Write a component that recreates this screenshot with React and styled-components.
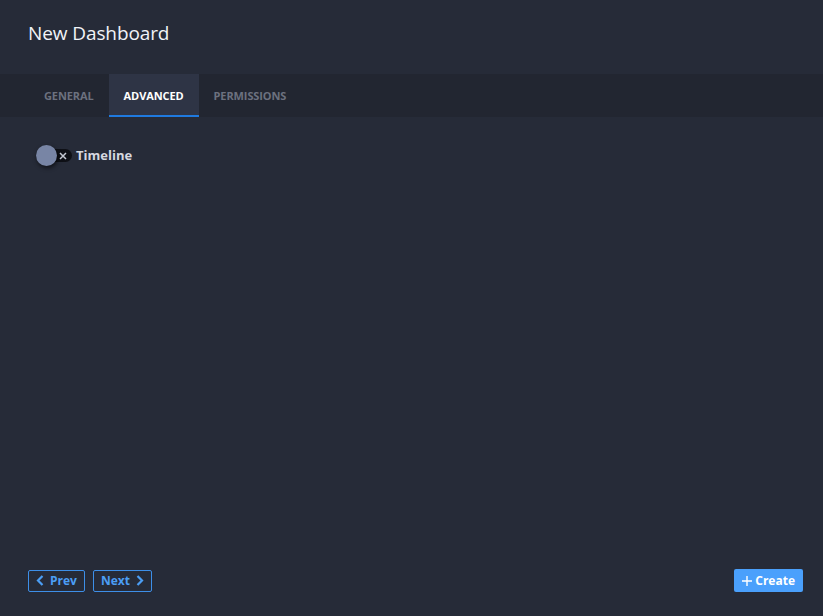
import React, { useState } from "react";
import styled, { createGlobalStyle } from "styled-components";

const GlobalStyle = createGlobalStyle`
  html, body {
    margin: 0;
    padding: 0;
    background: #262b38;
    font-family: "Open Sans", "Noto Sans", sans-serif;
  }
  * { box-sizing: border-box; }
`;

const Page = styled.div`
  width: 823px;
  height: 616px;
  display: flex;
  flex-direction: column;
  background: #262b38;
`;

const Header = styled.div`
  height: 74px;
  padding: 20px 28px 0;
`;

const Title = styled.h1`
  margin: 0;
  color: #f1f3f7;
  font-size: 19px;
  font-weight: 400;
  line-height: 26px;
  letter-spacing: -0.1px;
`;

const TabBar = styled.div`
  height: 43px;
  display: flex;
  padding-left: 29px;
  background: #222631;
`;

const Tab = styled.div`
  display: flex;
  align-items: center;
  padding: 2px 15px 0;
  font-size: 11px;
  font-weight: 700;
  letter-spacing: -0.1px;
  color: ${(p) => (p.$active ? "#ffffff" : "#6c717f")};
  background: ${(p) => (p.$active ? "#2e3445" : "transparent")};
  border-bottom: 2px solid ${(p) => (p.$active ? "#1f7ae0" : "transparent")};
  cursor: pointer;
`;

const Body = styled.div`
  flex: 1;
  padding: 29px 36px 0;
`;

const ToggleRow = styled.label`
  display: flex;
  align-items: center;
  gap: 4px;
  cursor: pointer;
`;

const Track = styled.div`
  position: relative;
  width: 36px;
  height: 13px;
  border-radius: 7px;
  background: #0e1016;
`;

const Knob = styled.div`
  position: absolute;
  left: 0;
  top: -4px;
  width: 21px;
  height: 21px;
  border-radius: 50%;
  background: #7885a5;
  box-shadow: 1px 2px 4px rgba(0, 0, 0, 0.6);
`;

const Cross = styled.svg`
  position: absolute;
  left: 23px;
  top: 3px;
`;

const Label = styled.span`
  color: #d6d9e0;
  font-size: 13px;
  font-weight: 700;
`;

const Footer = styled.div`
  display: flex;
  align-items: center;
  justify-content: space-between;
  padding: 0 20px 24px 28px;
`;

const NavGroup = styled.div`
  display: flex;
  gap: 8px;
`;

const OutlineButton = styled.button`
  display: flex;
  align-items: center;
  gap: 6px;
  height: 22px;
  padding: 0 7px;
  border: 1px solid #3d8fe8;
  border-radius: 2px;
  background: transparent;
  color: #4b9ef5;
  font-family: inherit;
  font-size: 12px;
  font-weight: 700;
  cursor: pointer;
`;

const PrimaryButton = styled.button`
  display: flex;
  align-items: center;
  gap: 3px;
  height: 23px;
  padding: 0 8px;
  border: none;
  border-radius: 2px;
  background: #4aa0fc;
  color: #ffffff;
  font-family: inherit;
  font-size: 12px;
  font-weight: 700;
  cursor: pointer;
`;

const Chevron = ({ dir }) => (
  <svg width="8" height="11" viewBox="0 0 8 11">
    <path
      d={dir === "left" ? "M6.5 1 L2 5.5 L6.5 10" : "M1.5 1 L6 5.5 L1.5 10"}
      fill="none"
      stroke="currentColor"
      strokeWidth="2.2"
    />
  </svg>
);

const Plus = () => (
  <svg width="10" height="10" viewBox="0 0 10 10">
    <path d="M5 0 V10 M0 5 H10" stroke="currentColor" strokeWidth="1.4" />
  </svg>
);

const tabs = ["General", "Advanced", "Permissions"];

export default function App() {
  const [active, setActive] = useState(1);
  return (
    <Page>
      <GlobalStyle />
      <Header>
        <Title>New Dashboard</Title>
      </Header>
      <TabBar>
        {tabs.map((t, i) => (
          <Tab key={t} $active={i === active} onClick={() => setActive(i)}>
            {t.toUpperCase()}
          </Tab>
        ))}
      </TabBar>
      <Body>
        <ToggleRow>
          <Track>
            <Knob />
            <Cross width="8" height="8" viewBox="0 0 8 8">
              <path d="M1 1 L7 7 M7 1 L1 7" stroke="#c4c8d2" strokeWidth="1.5" />
            </Cross>
          </Track>
          <Label>Timeline</Label>
        </ToggleRow>
      </Body>
      <Footer>
        <NavGroup>
          <OutlineButton>
            <Chevron dir="left" />
            Prev
          </OutlineButton>
          <OutlineButton>
            Next
            <Chevron dir="right" />
          </OutlineButton>
        </NavGroup>
        <PrimaryButton>
          <Plus />
          Create
        </PrimaryButton>
      </Footer>
    </Page>
  );
}
